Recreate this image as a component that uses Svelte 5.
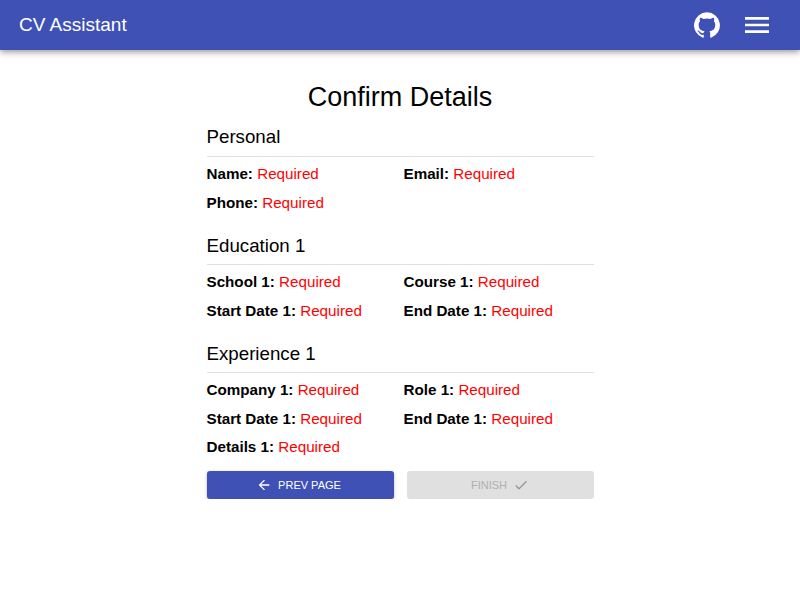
<script lang="ts">
	interface Section {
		title: string;
		fields: string[];
	}

	const sections: Section[] = [
		{ title: 'Personal', fields: ['Name', 'Email', 'Phone'] },
		{ title: 'Education 1', fields: ['School 1', 'Course 1', 'Start Date 1', 'End Date 1'] },
		{ title: 'Experience 1', fields: ['Company 1', 'Role 1', 'Start Date 1', 'End Date 1', 'Details 1'] }
	];
</script>

<header class="app-bar">
	<div class="brand">CV Assistant</div>
	<div class="actions">
		<button class="icon-btn" aria-label="GitHub">
			<svg viewBox="0 0 24 24" width="26" height="26"><path fill="#fff" d="M12 .3a12 12 0 0 0-3.8 23.38c.6.12.83-.26.83-.57L9 21.07c-3.34.72-4.04-1.61-4.04-1.61-.55-1.39-1.34-1.76-1.34-1.76-1.08-.74.09-.73.09-.73 1.2.09 1.84 1.24 1.84 1.24 1.07 1.83 2.8 1.3 3.49 1 .1-.78.42-1.31.76-1.61-2.67-.3-5.47-1.33-5.47-5.93 0-1.31.47-2.38 1.24-3.22-.14-.3-.54-1.52.1-3.18 0 0 1-.32 3.3 1.23a11.5 11.5 0 0 1 6 0c2.28-1.55 3.29-1.23 3.29-1.23.64 1.66.24 2.88.12 3.18a4.65 4.65 0 0 1 1.23 3.22c0 4.61-2.8 5.63-5.48 5.92.42.36.81 1.1.81 2.22l-.01 3.29c0 .31.2.69.82.57A12 12 0 0 0 12 .3"/></svg>
		</button>
		<button class="icon-btn" aria-label="Menu">
			<svg viewBox="0 0 24 24" width="32" height="32"><path fill="#fff" d="M3 18h18v-2H3v2zm0-5h18v-2H3v2zm0-7v2h18V6H3z"/></svg>
		</button>
	</div>
</header>

<main class="page">
	<h1>Confirm Details</h1>
	<div class="content">
		{#each sections as section}
			<section class="section">
				<h2>{section.title}</h2>
				<hr />
				<div class="grid">
					{#each section.fields as field}
						<p><strong>{field}:</strong> <span class="missing">Required</span></p>
					{/each}
				</div>
			</section>
		{/each}
		<div class="buttons">
			<button class="btn primary">
				<svg viewBox="0 0 24 24" width="16" height="16"><path fill="currentColor" d="M20 11H7.83l5.59-5.59L12 4l-8 8 8 8 1.41-1.41L7.83 13H20v-2z"/></svg>
				PREV PAGE
			</button>
			<button class="btn disabled" disabled>
				FINISH
				<svg viewBox="0 0 24 24" width="16" height="16"><path fill="#999" d="M9 16.17 4.83 12l-1.42 1.41L9 19 21 7l-1.41-1.41z"/></svg>
			</button>
		</div>
	</div>
</main>

<style>
	:global(body) {
		margin: 0;
		background: #fff;
		font-family: "Liberation Sans", Arial, sans-serif;
	}

	.app-bar {
		height: 50px;
		background: #3f51b5;
		color: #fff;
		display: flex;
		align-items: center;
		justify-content: space-between;
		padding: 0 27px 0 19px;
		box-shadow: 0 2px 4px -1px rgba(0,0,0,0.2), 0 4px 5px 0 rgba(0,0,0,0.14), 0 1px 10px 0 rgba(0,0,0,0.12);
	}

	.brand {
		font-size: 19px;
	}

	.actions {
		display: flex;
		align-items: center;
		gap: 21px;
	}

	.icon-btn {
		background: none;
		border: none;
		padding: 0;
		display: flex;
	}

	.page {
		width: 387px;
		margin: 0 auto;
		padding-top: 30px;
	}

	h1 {
		margin: 0;
		font-size: 27px;
		font-weight: 400;
		line-height: 34px;
		text-align: center;
		color: #000;
	}

	.section {
		margin-bottom: 10.2px;
	}

	.section:last-of-type {
		margin-bottom: 10.2px;
	}

	h2 {
		margin: 12px 0 8px;
		font-size: 18.72px;
		font-weight: 400;
		line-height: 22px;
	}

	.section + .section h2 {
		margin-top: 18px;
		margin-bottom: 7px;
	}

	hr {
		margin: 0;
		border: none;
		border-top: 1px solid #e0e0e0;
	}

	.grid {
		display: grid;
		grid-template-columns: 197px 1fr;
		margin-top: 3.4px;
	}

	.grid p {
		margin: 0;
		font-size: 15.2px;
		line-height: 28.3px;
	}

	.missing {
		color: #f00;
	}

	.buttons {
		display: grid;
		grid-template-columns: 1fr 1fr;
		gap: 13px;
	}

	.btn {
		height: 28px;
		border: none;
		border-radius: 3px;
		font-family: "Liberation Sans", Arial, sans-serif;
		font-size: 11px;
		display: flex;
		align-items: center;
		justify-content: center;
		gap: 6px;
	}

	.primary {
		background: #3f51b5;
		color: #fff;
		padding: 0 3px 0 0;
		box-shadow: 0 1px 3px rgba(0,0,0,0.3);
	}

	.disabled {
		background: #e0e0e0;
		color: #b0b0b0;
	}
</style>
